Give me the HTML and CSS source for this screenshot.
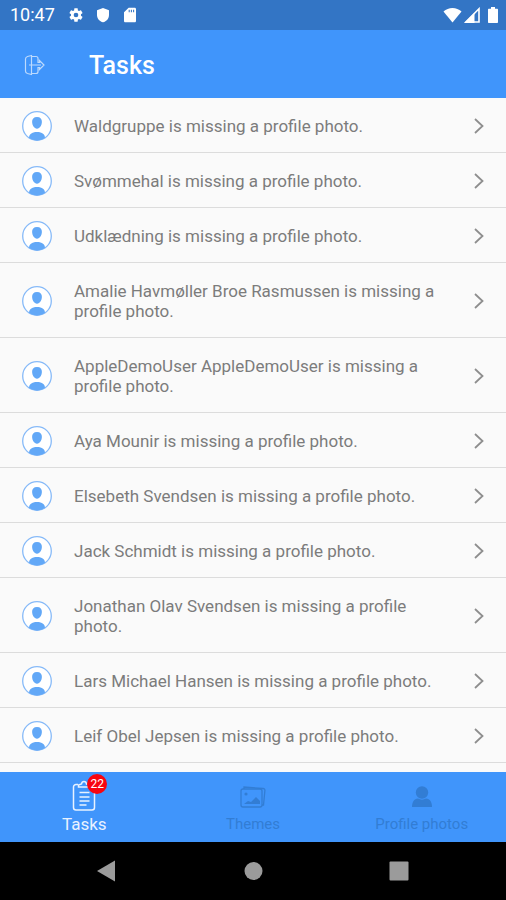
FILE: index.html
```html
<!DOCTYPE html>
<html lang="en">
<head>
<meta charset="utf-8">
<meta name="viewport" content="width=device-width, initial-scale=1">
<title>Tasks</title>
<link rel="stylesheet" href="styles.css">
</head>
<body>
<svg class="sprite" aria-hidden="true">
  <symbol id="avatar" viewBox="0 0 30 30">
    <circle cx="15" cy="15" r="14.3" fill="#fff" stroke="#87baf8" stroke-width="1.3"/>
    <path d="M15 6c3.400 0 5 2 4.900 5-.1 3.300-1.700 5.200-3 6.100-.8.800-3 .8-3.800 0-1.300-.9-2.900-2.800-3-6.100C10 8 11.600 6 15 6z" fill="#62a8f7"/>
    <path d="M7 26.800c0-3.500 2.600-5.900 8-5.900s8 2.400 8 5.900C20.600 28.600 18 29.400 15 29.400s-5.600-.8-8-2.600z" fill="#62a8f7"/>
  </symbol>
  <symbol id="chevron" viewBox="0 0 12 18">
    <path d="M2 2l7.500 7L2 16" fill="none" stroke="#8e8e8e" stroke-width="1.8"/>
  </symbol>
</svg>

<div class="status">
  <span class="clock">10:47</span>
  <svg class="status-icon" viewBox="0 0 24 24" fill="currentColor"><path d="M19.430 12.980c.04-.32.070-.64.070-.98s-.03-.66-.07-.98l2.110-1.650c.19-.15.240-.42.120-.64l-2-3.460c-.12-.22-.39-.3-.61-.22l-2.490 1c-.52-.4-1.080-.73-1.690-.98l-.38-2.650C14.460 2.180 14.250 2 14 2h-4c-.25 0-.46.180-.49.420l-.38 2.650c-.61.250-1.170.590-1.690.980l-2.490-1c-.23-.09-.49 0-.61.220l-2 3.460c-.13.220-.07.490.12.640l2.110 1.650c-.04.320-.07.650-.07.980s.03.660.07.980l-2.110 1.650c-.19.150-.24.420-.12.640l2 3.460c.12.220.39.300.61.220l2.490-1c.52.400 1.080.730 1.690.980l.38 2.650c.03.240.24.420.49.420h4c.25 0 .46-.18.490-.42l.38-2.650c.61-.25 1.170-.59 1.690-.98l2.490 1c.23.090.49 0 .61-.22l2-3.460c.12-.22.070-.49-.12-.64l-2.110-1.650zM12 15.500A3.500 3.500 0 1 1 12 8.500a3.500 3.500 0 0 1 0 7z"/></svg>
  <svg class="status-icon" viewBox="0 0 24 24" fill="currentColor"><path d="M12 1.500L3 5v7c0 5.500 3.800 9.700 9 11 5.200-1.300 9-5.500 9-11V5z"/></svg>
  <svg class="status-icon" viewBox="0 0 24 24" fill="currentColor"><path fill-rule="evenodd" d="M19 1h-9L3 8v13c0 1.100.9 2 2 2h14c1.100 0 2-.9 2-2V3c0-1.100-.9-2-2-2zM10 4h1.600v4H10zm3.300 0h1.600v4h-1.600zm3.300 0h1.600v4h-1.600z"/></svg>
  <div class="signals">
    <svg class="wifi" viewBox="0 0 20 16" fill="currentColor"><path d="M10 16L.5 4.300C3.200 2 6.400.7 10 .7s6.800 1.300 9.500 3.600z"/></svg>
    <svg class="cell" viewBox="0 0 16 16"><path d="M15 1.800V15H1.800z" fill="none" stroke="currentColor" stroke-width="1.600"/><path d="M.2 16L10.500 5.700V16z" fill="currentColor"/></svg>
    <svg class="battery" viewBox="0 0 10 16" fill="currentColor"><path d="M3 0h4v1.800h2c.6 0 1 .4 1 1V15c0 .6-.4 1-1 1H1c-.6 0-1-.4-1-1V2.800c0-.6.400-1 1-1h2z"/></svg>
  </div>
</div>

<header class="appbar">
  <button class="logout" type="button" aria-label="Log out">
    <svg viewBox="0 0 21 22" fill="none" stroke="currentColor" stroke-width="1.200"><path d="M7.500 1.500L3.500 2.500Q1.500 3.200 1.500 5v12q0 1.800 2 2.500l4 1zM7.500 2.500H12q2 0 2 2V8.500h1.500V6.500L20 11l-4.500 4.500v-2H14v4q0 2-2 2H7.500M5 11h12"/></svg>
  </button>
  <h1>Tasks</h1>
</header>

<main>
  <ul class="tasks">
    <li><a href="#"><svg class="avatar"><use href="#avatar"/></svg><span>Waldgruppe is missing a profile photo.</span><svg class="chevron"><use href="#chevron"/></svg></a></li>
    <li><a href="#"><svg class="avatar"><use href="#avatar"/></svg><span>Svømmehal is missing a profile photo.</span><svg class="chevron"><use href="#chevron"/></svg></a></li>
    <li><a href="#"><svg class="avatar"><use href="#avatar"/></svg><span>Udklædning is missing a profile photo.</span><svg class="chevron"><use href="#chevron"/></svg></a></li>
    <li><a href="#"><svg class="avatar"><use href="#avatar"/></svg><span>Amalie Havmøller Broe Rasmussen is missing a profile photo.</span><svg class="chevron"><use href="#chevron"/></svg></a></li>
    <li><a href="#"><svg class="avatar"><use href="#avatar"/></svg><span>AppleDemoUser AppleDemoUser is missing a profile photo.</span><svg class="chevron"><use href="#chevron"/></svg></a></li>
    <li><a href="#"><svg class="avatar"><use href="#avatar"/></svg><span>Aya Mounir is missing a profile photo.</span><svg class="chevron"><use href="#chevron"/></svg></a></li>
    <li><a href="#"><svg class="avatar"><use href="#avatar"/></svg><span>Elsebeth Svendsen is missing a profile photo.</span><svg class="chevron"><use href="#chevron"/></svg></a></li>
    <li><a href="#"><svg class="avatar"><use href="#avatar"/></svg><span>Jack Schmidt is missing a profile photo.</span><svg class="chevron"><use href="#chevron"/></svg></a></li>
    <li><a href="#"><svg class="avatar"><use href="#avatar"/></svg><span>Jonathan Olav Svendsen is missing a profile photo.</span><svg class="chevron"><use href="#chevron"/></svg></a></li>
    <li><a href="#"><svg class="avatar"><use href="#avatar"/></svg><span>Lars Michael Hansen is missing a profile photo.</span><svg class="chevron"><use href="#chevron"/></svg></a></li>
    <li><a href="#"><svg class="avatar"><use href="#avatar"/></svg><span>Leif Obel Jepsen is missing a profile photo.</span><svg class="chevron"><use href="#chevron"/></svg></a></li>
  </ul>
</main>

<nav class="tabs">
  <a class="tab active" href="#">
    <span class="tab-icon">
      <svg viewBox="0 0 32 32" fill="none" stroke="currentColor" stroke-width="1.500"><path d="M10 4.500H8a2.500 2.500 0 0 0-2.500 2.500v20.500A2.500 2.500 0 0 0 8 30h16a2.500 2.500 0 0 0 2.500-2.500V7A2.500 2.500 0 0 0 24 4.500h-3M10.500 7V5l3-1C14 .8 18 .8 18.500 4l2.500.5V7zM11.500 12.500h10M11.500 17h10M11.500 21h10M11.500 25h7"/></svg>
      <span class="badge">22</span>
    </span>
    <span class="tab-label">Tasks</span>
  </a>
  <a class="tab" href="#">
    <span class="tab-icon">
      <svg viewBox="0 0 32 32"><path d="M7 9V7l19 1.500c1.500.1 2 .8 1.900 2L26.500 25H25" fill="none" stroke="currentColor" stroke-width="1.300"/><rect x="4" y="9" width="21" height="18" rx="2" fill="none" stroke="currentColor" stroke-width="1.300"/><circle cx="9" cy="14" r="1.600" fill="currentColor"/><path d="M7 24l4-3 3 1 5-5 4 4v3z" fill="currentColor"/></svg>
    </span>
    <span class="tab-label">Themes</span>
  </a>
  <a class="tab" href="#">
    <span class="tab-icon">
      <svg viewBox="0 0 32 32" fill="currentColor"><circle cx="16" cy="12.500" r="6.200"/><path d="M6 27c0-5 2-8 6-8.500 2.500 1.500 5.500 1.500 8 0 4 .5 6 3.500 6 8.500z"/></svg>
    </span>
    <span class="tab-label">Profile photos</span>
  </a>
</nav>

<div class="system">
  <button type="button" aria-label="Back"><svg viewBox="0 0 22 22" fill="currentColor"><path d="M19 .5v21L1 11z"/></svg></button>
  <button type="button" aria-label="Home"><svg viewBox="0 0 22 22" fill="currentColor"><circle cx="11.500" cy="11" r="9"/></svg></button>
  <button type="button" aria-label="Recent apps"><svg viewBox="0 0 22 22" fill="currentColor"><rect x="1.500" y="1.500" width="19" height="19" rx="1"/></svg></button>
</div>
</body>
</html>
```
FILE: styles.css
```css
* {
  box-sizing: border-box;
}

body {
  margin: 0;
  height: 100vh;
  display: flex;
  flex-direction: column;
  background: #fafafa;
  color: #7c7c7c;
  font-family: Roboto, sans-serif;
}

svg {
  display: block;
  flex: none;
}

a {
  color: inherit;
  text-decoration: none;
}

button {
  padding: 0;
  border: 0;
  background: none;
  color: inherit;
}

.sprite {
  position: absolute;
  width: 0;
  height: 0;
}

.status {
  flex: none;
  display: flex;
  align-items: center;
  gap: 11px;
  height: 30px;
  padding: 0 8px 0 10px;
  background: #3375c5;
  color: #fff;
}

.clock {
  margin-right: 2px;
  font-size: 18px;
  line-height: 30px;
}

.status-icon {
  width: 16px;
  height: 16px;
}

.signals {
  display: flex;
  gap: 2px;
  margin-left: auto;
}

.wifi {
  width: 19px;
  height: 16px;
}

.cell {
  width: 16px;
  height: 16px;
}

.battery {
  width: 10px;
  height: 16px;
  margin-left: 6px;
}

.appbar {
  flex: none;
  display: flex;
  align-items: center;
  gap: 44px;
  height: 68px;
  padding: 2px 24px 0;
  background: #4095fb;
  color: #fff;
}

.logout svg {
  width: 21px;
  height: 22px;
  opacity: 0.65;
}

h1 {
  margin: 0;
  padding-top: 2px;
  font-size: 25px;
  font-weight: 500;
  line-height: 32px;
}

main {
  flex: 1;
  min-height: 0;
  overflow: hidden;
}

.tasks {
  margin: 0;
  padding: 0;
  list-style: none;
}

.tasks a {
  display: flex;
  align-items: center;
  gap: 22px;
  padding: 18px 21px 16px 22px;
  border-bottom: 1px solid #dcdcdc;
  font-size: 17px;
  line-height: 20px;
}

.tasks span {
  flex: 1;
}

.avatar {
  width: 30px;
  height: 30px;
  margin: -5px 0;
}

.chevron {
  width: 12px;
  height: 18px;
}

.tabs {
  flex: none;
  display: flex;
  height: 70px;
  background: #4095fb;
  color: #327dd4;
}

.tab {
  flex: 1;
  display: flex;
  flex-direction: column;
  align-items: center;
  padding-top: 8px;
}

.tab-icon {
  position: relative;
}

.tab-icon svg {
  width: 32px;
  height: 32px;
}

.tab-label {
  font-size: 15px;
  line-height: 24px;
}

.active {
  color: #e8f2ff;
}

.active .tab-label {
  font-size: 17px;
}

.badge {
  position: absolute;
  top: -6px;
  left: 19px;
  width: 20px;
  border-radius: 10px;
  background: #f80510;
  color: #fff;
  font-size: 12px;
  line-height: 20px;
  text-align: center;
}

.system {
  flex: none;
  display: flex;
  justify-content: center;
  gap: 124px;
  height: 58px;
  background: #000;
  color: #9b9b9b;
}

.system svg {
  width: 22px;
  height: 22px;
}
```
